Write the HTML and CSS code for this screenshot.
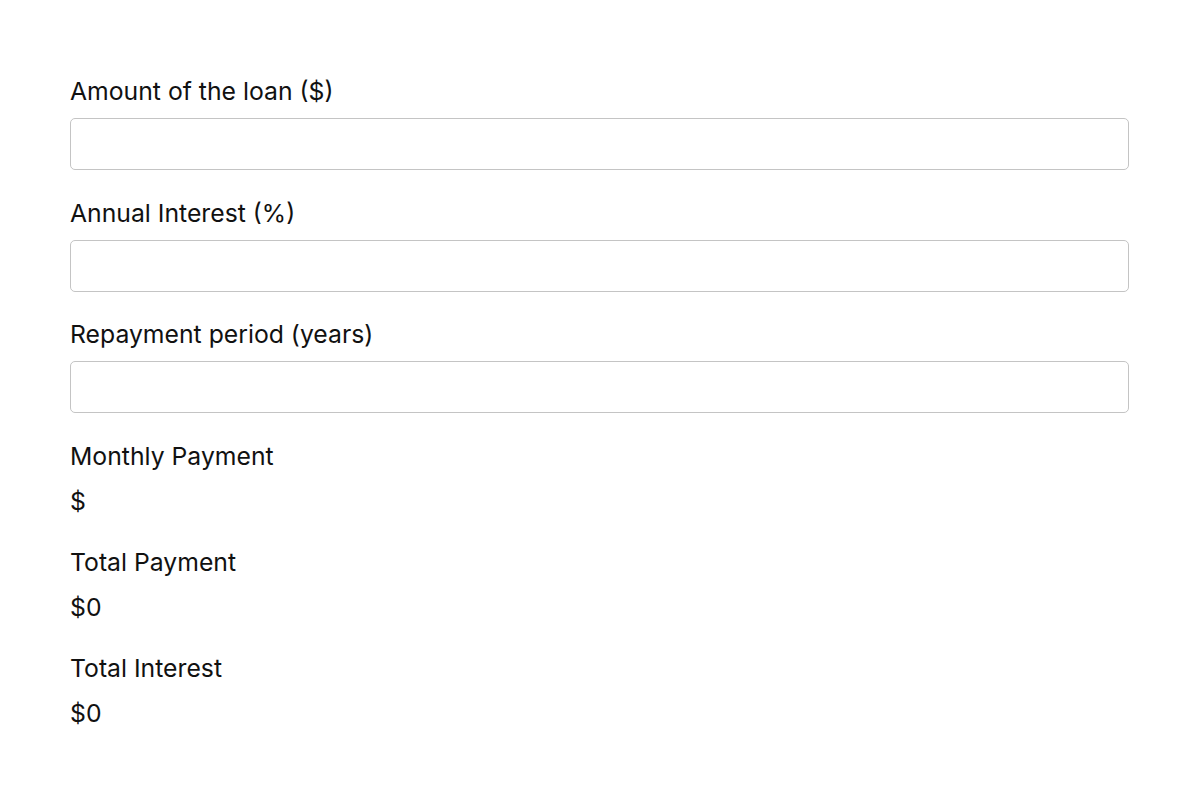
FILE: index.html
```html
<!DOCTYPE html>
<html>
<head>
<meta charset="utf-8">
<link rel="stylesheet" href="styles.css">
</head>
<body>
<main class="calc">
  <div class="field">
    <label class="label" for="amount">Amount of the loan ($)</label>
    <input class="input" id="amount" type="text">
  </div>
  <div class="field">
    <label class="label" for="interest">Annual Interest (%)</label>
    <input class="input" id="interest" type="text">
  </div>
  <div class="field">
    <label class="label" for="period">Repayment period (years)</label>
    <input class="input" id="period" type="text">
  </div>
  <div class="result">
    <div class="label">Monthly Payment</div>
    <div class="value">$</div>
  </div>
  <div class="result">
    <div class="label">Total Payment</div>
    <div class="value">$0</div>
  </div>
  <div class="result">
    <div class="label">Total Interest</div>
    <div class="value">$0</div>
  </div>
</main>
</body>
</html>
```
FILE: styles.css
```css
html, body {
  margin: 0;
  padding: 0;
  background: #ffffff;
}
body {
  font-family: Inter, "Noto Sans", sans-serif;
  color: #111111;
}
.calc {
  padding: 73px 71px 0 70px;
  display: flex;
  flex-direction: column;
}
.field {
  display: flex;
  flex-direction: column;
  gap: 9px;
  margin-bottom: 24.5px;
}
.label {
  display: block;
  font-size: 24.75px;
  line-height: 36px;
  font-weight: 400;
}
.input {
  box-sizing: border-box;
  height: 52px;
  width: 100%;
  border: 1.5px solid #c4c4c4;
  border-radius: 5px;
  background: #fff;
  font: inherit;
  font-size: 24px;
  padding: 0 12px;
  margin: 0;
}
.result {
  display: flex;
  flex-direction: column;
  gap: 9px;
  margin-bottom: 25px;
}
.value {
  font-size: 24.75px;
  line-height: 36px;
}
```
